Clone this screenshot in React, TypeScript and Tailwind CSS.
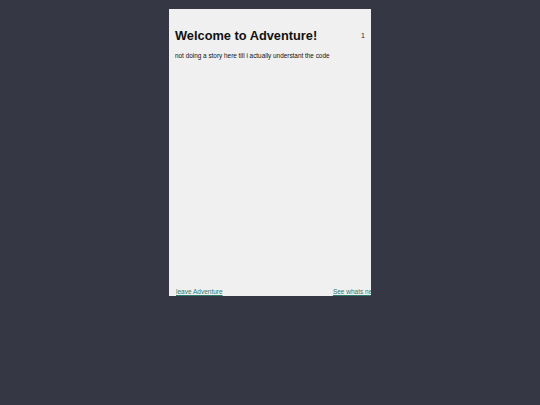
export default function App() {
  return (
    <div className="w-[540px] h-[405px] bg-[#363744] overflow-hidden" style={{ fontFamily: '"Liberation Sans", Arial, sans-serif' }}>
      <div className="ml-[169px] pt-[9px]">
        <div className="w-[202px] h-[287px] bg-[#f0f0f0] overflow-hidden flex flex-col">
          <div className="flex items-center justify-between pl-[6px] pr-[6px] mt-[19px]">
            <h1 className="text-[12.8px] font-bold text-[#111] leading-[16px]">Welcome to Adventure!</h1>
            <span className="text-[7px] text-[#222]">1</span>
          </div>
          <p className="pl-[6px] mt-[7px] text-[6.4px] text-[#111] leading-[10px]">not doing a story here till i actually understant the code</p>
          <div className="flex-1" />
          <div className="flex justify-between pl-[7px] w-[208px] leading-[8px]">
            <a className="text-[6.5px] text-[#2e7a6a] underline">leave Adventure</a>
            <a className="text-[6.5px] text-[#2e7a6a] underline">See whats new</a>
          </div>
        </div>
      </div>
    </div>
  );
}
